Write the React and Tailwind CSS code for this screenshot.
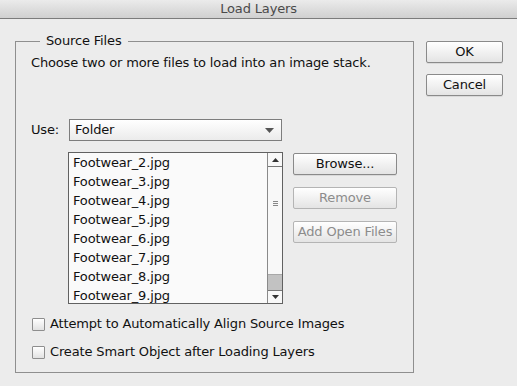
import React from "react";

const files = [
  "Footwear_2.jpg",
  "Footwear_3.jpg",
  "Footwear_4.jpg",
  "Footwear_5.jpg",
  "Footwear_6.jpg",
  "Footwear_7.jpg",
  "Footwear_8.jpg",
  "Footwear_9.jpg",
];

function Btn({ children, disabled, className = "" }) {
  return (
    <div
      className={
        "flex items-center justify-center h-[22px] rounded-[2px] border text-[13px] leading-[16px] bg-gradient-to-b from-[#ffffff] to-[#e4e4e4] " +
        (disabled
          ? "border-[#b4b4b4] text-[#8c8c8c] "
          : "border-[#8a8a8a] text-[#111] shadow-[0_1px_0_rgba(0,0,0,0.08)] ") +
        className
      }
    >
      {children}
    </div>
  );
}

function Check({ label }) {
  return (
    <div className="flex items-center h-[16px]">
      <div className="w-[13px] h-[13px] border border-[#8e8e8e] rounded-[1px] bg-gradient-to-b from-[#ffffff] to-[#e2e2e2] ml-[1px]" />
      <span className="ml-[5px] text-[13px] leading-[16px] text-[#111]">{label}</span>
    </div>
  );
}

export default function App() {
  return (
    <div className="w-[517px] h-[386px] bg-[#ececec] flex flex-col font-['DejaVu_Sans',sans-serif] tracking-[-0.15px] text-[#111] overflow-hidden">
      <div className="h-[19px] border-b border-[#7c7c7c] bg-gradient-to-b from-[#ebebeb] to-[#d0d0d0] flex items-center justify-center">
        <span className="text-[13px] leading-[16px] text-[#4a4a4a]">Load Layers</span>
      </div>
      <div className="flex pl-[15px]">
        <fieldset className="mt-[14px] w-[399px] h-[340px] border border-[#8f8f8f] px-[15px]">
          <legend className="ml-[9px] px-[6px] text-[13px] leading-[16px]">Source Files</legend>
          <div className="mt-[6px] text-[13px] leading-[16px]">
            Choose two or more files to load into an image stack.
          </div>
          <div className="mt-[48px] flex items-center h-[22px]">
            <span className="text-[13px] leading-[16px] w-[38px]">Use:</span>
            <div className="w-[213px] h-[22px] border border-[#7d7d7d] bg-gradient-to-b from-[#ffffff] to-[#ebebeb] flex items-center justify-between pl-[5px] pr-[7px]">
              <span className="text-[13px] leading-[16px]">Folder</span>
              <svg width="9" height="5" viewBox="0 0 9 5">
                <path d="M0 0 H9 L4.5 5 Z" fill="#555" />
              </svg>
            </div>
          </div>
          <div className="mt-[11px] flex">
            <div className="ml-[37px] w-[215px] h-[152px] border border-[#616161] bg-[#fafafa] flex">
              <div className="flex-1 overflow-hidden">
                {files.map((f) => (
                  <div key={f} className="h-[19px] pl-[4px] flex items-center text-[13px] leading-[16px]">
                    {f}
                  </div>
                ))}
              </div>
              <div className="w-[15px] border-l border-[#8a8a8a] flex flex-col bg-[#f8f8f8]">
                <div className="h-[14px] border-b border-[#777] flex items-center justify-center">
                  <svg width="7" height="4" viewBox="0 0 7 4">
                    <path d="M0 4 H7 L3.5 0 Z" fill="#333" />
                  </svg>
                </div>
                <div className="flex-1 flex items-center justify-center">
                  <svg width="5" height="5" viewBox="0 0 5 5" className="mb-[34px]">
                    <path d="M0 0.5 H5 M0 2.5 H5 M0 4.5 H5" stroke="#888" strokeWidth="1" />
                  </svg>
                </div>
                <div className="h-[16px] bg-[#c2c2c2] border-t border-[#a8a8a8]" />
                <div className="h-[13px] border-t border-[#777] flex items-center justify-center">
                  <svg width="7" height="4" viewBox="0 0 7 4">
                    <path d="M0 0 H7 L3.5 4 Z" fill="#333" />
                  </svg>
                </div>
              </div>
            </div>
            <div className="ml-[10px] w-[104px] flex flex-col gap-[12px] mt-[1px]">
              <Btn>Browse...</Btn>
              <Btn disabled>Remove</Btn>
              <Btn disabled>Add Open Files</Btn>
            </div>
          </div>
          <div className="mt-[12px] flex flex-col gap-[12px]">
            <Check label="Attempt to Automatically Align Source Images" />
            <Check label="Create Smart Object after Loading Layers" />
          </div>
        </fieldset>
        <div className="ml-[12px] w-[77px] mt-[22px] flex flex-col gap-[11px]">
          <Btn>OK</Btn>
          <Btn>Cancel</Btn>
        </div>
      </div>
    </div>
  );
}
